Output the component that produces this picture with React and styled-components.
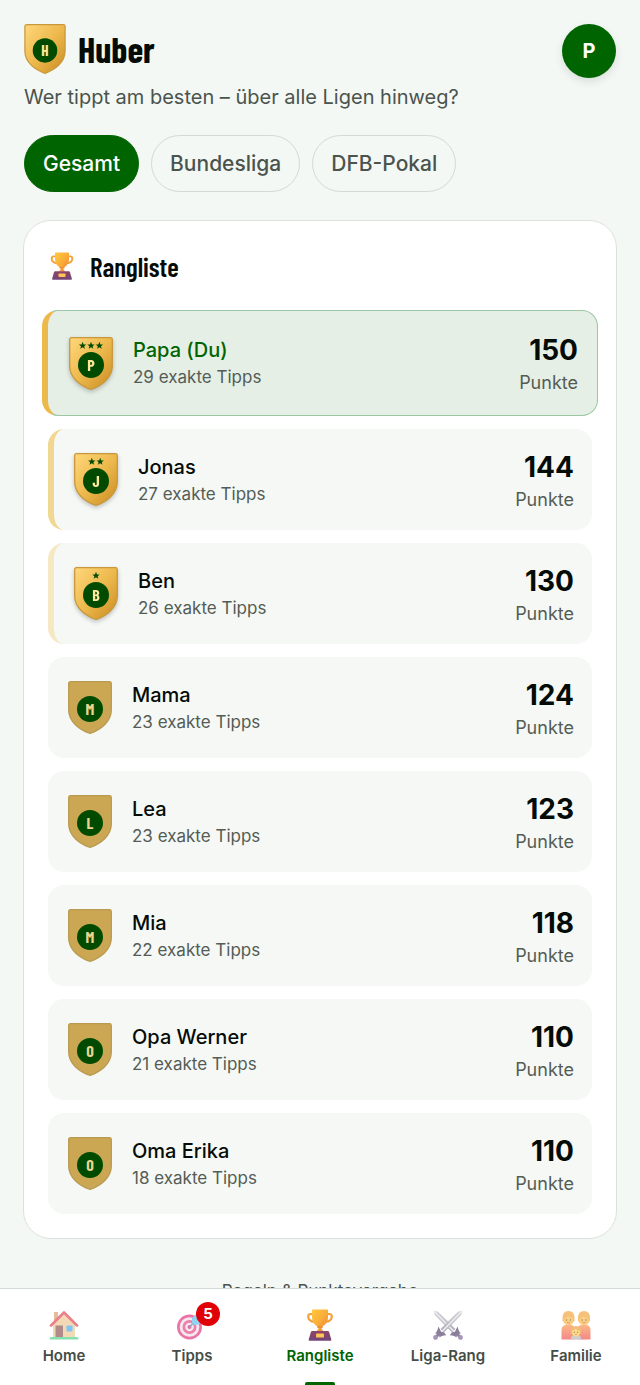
import React, { useState } from "react";
import styled, { createGlobalStyle, css } from "styled-components";

const GlobalStyle = createGlobalStyle`
  * {
    box-sizing: border-box;
  }
  body {
    margin: 0;
    background: #f3f8f5;
    color: #050c07;
    font-family: Inter, "Liberation Sans", sans-serif;
    -webkit-font-smoothing: antialiased;
  }
  button {
    font-family: inherit;
    cursor: pointer;
  }
`;

const display = css`
  font-family: "Barlow Condensed", "Liberation Sans Narrow", "Open Sans Condensed", "Roboto Condensed", sans-serif;
`;

// scrolls underneath the fixed tab bar
const Page = styled.main`
  display: flex;
  flex-direction: column;
  height: 100vh;
  overflow-y: auto;
  scrollbar-width: none;
  padding: 24px 23px 120px;
`;

const TopBar = styled.header`
  display: flex;
  flex-shrink: 0;
  align-items: flex-start;
  justify-content: space-between;
  padding: 0 1px;
`;

const Brand = styled.div`
  display: flex;
  align-items: flex-start;
  gap: 12px;
`;

const FamilyName = styled.h1`
  ${display}
  margin: 0;
  font-size: 36px;
  font-weight: 700;
  line-height: 50px;
`;

const Avatar = styled.button`
  width: 54px;
  height: 54px;
  border: 0;
  border-radius: 50%;
  background: #006400;
  color: #fff;
  font-size: 20px;
  font-weight: 700;
  box-shadow: 0 4px 8px rgba(0, 0, 0, 0.1);
`;

const Subtitle = styled.p`
  margin: 5px 1px 24px;
  color: #4b534d;
  font-size: 20px;
  line-height: 28px;
`;

const Chips = styled.div`
  display: flex;
  flex-shrink: 0;
  gap: 12px;
  padding: 0 1px;
  margin-bottom: 28px;
`;

const Chip = styled.button`
  height: 57px;
  padding: 0 18px;
  border: 1px solid ${(p) => (p.$active ? "#006400" : "#d3dad5")};
  border-radius: 29px;
  background: ${(p) => (p.$active ? "#006400" : "transparent")};
  color: ${(p) => (p.$active ? "#fff" : "#4b534d")};
  font-size: 21px;
  font-weight: 500;
`;

const Card = styled.section`
  flex-shrink: 0;
  padding: 24px;
  border: 1px solid #dbe2dd;
  border-radius: 28px;
  background: #fff;
`;

const CardTitle = styled.h2`
  ${display}
  display: flex;
  align-items: center;
  gap: 14px;
  margin: 3px 0 26px;
  font-size: 27px;
  font-weight: 600;
  line-height: 36px;
`;

const List = styled.ol`
  display: flex;
  flex-direction: column;
  gap: 13px;
  margin: 0;
  padding: 0;
  list-style: none;
`;

const podiumColors = { 1: "#ebb94c", 2: "#f0d792", 3: "#f5e9c4" };

const Row = styled.li`
  display: flex;
  align-items: center;
  gap: 20px;
  height: 101px;
  padding: 0 18px 0 20px;
  border-radius: 16px;
  background: #f5f8f5;
  ${(p) =>
    podiumColors[p.$rank] &&
    css`
      border-left: 6px solid ${podiumColors[p.$rank]};
    `}
  ${(p) =>
    p.$me &&
    css`
      height: 106px;
      margin: 0 -6px;
      padding: 0 19px 0 21px;
      border-top: 1px solid #9dc7a2;
      border-right: 1px solid #9dc7a2;
      border-bottom: 1px solid #9dc7a2;
      background: #e5efe6;
    `}
`;

const Player = styled.div`
  flex: 1;
  min-width: 0;
`;

const Name = styled.div`
  color: ${(p) => (p.$me ? "#006400" : "#050c07")};
  font-size: 20px;
  font-weight: 500;
  line-height: 28px;
`;

const Detail = styled.div`
  color: #545c56;
  font-size: 17px;
  line-height: 26px;
`;

const Score = styled.div`
  padding-top: 4px;
  text-align: right;
`;

const Points = styled.div`
  font-size: 28px;
  font-weight: 700;
  line-height: 36px;
`;

const PointsLabel = styled.div`
  color: #545c56;
  font-size: 18px;
  line-height: 30px;
`;

const RulesLink = styled.a`
  align-self: center;
  flex-shrink: 0;
  margin-top: 38px;
  color: #4b534d;
  font-size: 17px;
  line-height: 28px;
  text-decoration: none;
`;

const TabBar = styled.nav`
  position: fixed;
  right: 0;
  bottom: 0;
  left: 0;
  display: grid;
  grid-template-columns: repeat(5, 1fr);
  height: 97px;
  border-top: 1px solid #d3dad5;
  background: #fff;
`;

const Tab = styled.a`
  display: flex;
  flex-direction: column;
  align-items: center;
  gap: 4px;
  padding-top: 20px;
  color: ${(p) => (p.$active ? "#006400" : "#454d47")};
  font-size: 15px;
  font-weight: 600;
  line-height: 22px;
  text-decoration: none;
`;

const TabIcon = styled.span`
  position: relative;
  display: flex;
  height: 32px;

  svg {
    opacity: ${(p) => (p.$active ? 1 : 0.65)};
  }
`;

const Badge = styled.span`
  position: absolute;
  top: -7px;
  right: -12px;
  width: 24px;
  height: 24px;
  border-radius: 50%;
  background: #e10008;
  color: #fff;
  font-size: 15px;
  font-weight: 700;
  line-height: 24px;
  text-align: center;
`;

const Indicator = styled.span`
  width: 30px;
  height: 3px;
  margin-top: auto;
  border-radius: 2px 2px 0 0;
  background: #006400;
`;

const CrestSvg = styled.svg`
  ${display}
  flex-shrink: 0;
  overflow: visible;
  font-weight: 700;
  filter: ${(p) => (p.$raised ? "drop-shadow(0 2px 2px rgba(0, 0, 0, 0.22))" : "none")};
`;

const starPath = "M0-3.8 1-1.2 3.7-1.1 1.6.6 2.3 3.2 0 1.7-2.3 3.2-1.6.6-3.7-1.1-1-1.2Z";

function Crest({ letter, stars = 0, shiny = true, raised = false, width = 44, height = 53 }) {
  const start = 22 - (stars - 1) * 4.2;
  return (
    <CrestSvg $raised={raised} width={width} height={height} viewBox="0 0 44 53" aria-hidden="true">
      <defs>
        <linearGradient id="crestGold" x1="0" y1="0" x2="1" y2="1">
          <stop offset="0" stopColor="#ffd77c" />
          <stop offset=".5" stopColor="#edb94d" />
          <stop offset="1" stopColor="#c98b20" />
        </linearGradient>
      </defs>
      <path
        d="M2.5 .7H41.5Q43.3 .7 43.3 2.5V29C43.3 41 32 49 22 52.3 12 49 .7 41 .7 29V2.5Q.7 .7 2.5 .7Z"
        fill={shiny ? "url(#crestGold)" : "#cba753"}
        stroke={shiny ? "#c9983b" : "#b99a50"}
        strokeWidth="1.3"
      />
      {Array.from({ length: stars }, (_, i) => (
        <path key={i} d={starPath} transform={`translate(${start + i * 8.4} 8.6)`} fill="#004b00" />
      ))}
      <circle cx="22" cy="28" r="13" fill="#004b00" />
      <text x="22" y="34" textAnchor="middle" fontSize="16" fill={shiny ? "#ffe89a" : "#ead58c"}>
        {letter}
      </text>
    </CrestSvg>
  );
}

function Trophy({ size = 32 }) {
  return (
    <svg width={size} height={size} viewBox="0 0 32 32" aria-hidden="true">
      <defs>
        <linearGradient id="cup" x1="0" y1="0" x2="1" y2="1">
          <stop offset="0" stopColor="#ffc93c" />
          <stop offset=".5" stopColor="#fbae38" />
          <stop offset="1" stopColor="#f07c40" />
        </linearGradient>
        <linearGradient id="cupBase" x1="0" y1="0" x2="0" y2="1">
          <stop offset="0" stopColor="#8f4566" />
          <stop offset="1" stopColor="#744577" />
        </linearGradient>
      </defs>
      <path
        d="M9 5H6.6Q4.2 5 4.2 7.5C4.2 10.8 7 12.6 11 13M23 5H25.4Q27.8 5 27.8 7.5C27.8 10.8 25 12.6 21 13"
        fill="none"
        stroke="#f3a23c"
        strokeWidth="2.2"
      />
      <path
        d="M9 .5H23Q24 .5 24 1.5V8C24 13 21 16.5 18 17.5L17.5 19.5 19.5 22.5H12.5L14.5 19.5 14 17.5C11 16.5 8 13 8 8V1.5Q8 .5 9 .5Z"
        fill="url(#cup)"
      />
      <path d="M13 18H19" stroke="#e98a2a" strokeWidth="1.4" />
      <path
        d="M8.2 22H23.8Q24.8 22 25.1 23L27.3 30.5Q27.5 31.7 26.4 31.7H5.6Q4.5 31.7 4.7 30.5L6.9 23Q7.2 22 8.2 22Z"
        fill="url(#cupBase)"
      />
      <rect x="12" y="24.6" width="8" height="4" rx=".8" fill="#ffc356" />
    </svg>
  );
}

function House() {
  return (
    <svg width="32" height="32" viewBox="0 0 32 32" aria-hidden="true">
      <path d="M6 3H10V12H6Z" fill="#d69a68" />
      <path d="M5 14 16 4.5 27 14V29H5Z" fill="#efc592" />
      <path d="M7.5 16.5H15V28.5H7.5Z" fill="#854f4b" />
      <rect x="18.5" y="16.5" width="6" height="6" rx=".8" fill="#3ba7ee" />
      <path
        d="M3 16.5 16 3.5 29 16.5"
        fill="none"
        stroke="#df3e4c"
        strokeWidth="2.6"
        strokeLinecap="round"
        strokeLinejoin="round"
      />
      <path d="M3 28H29Q30.5 28 30.5 30.5H1.5Q1.5 28 3 28Z" fill="#45cf83" />
    </svg>
  );
}

function Target() {
  return (
    <svg width="32" height="32" viewBox="0 0 32 32" aria-hidden="true">
      <circle cx="13.5" cy="18" r="12.5" fill="#e02b78" />
      <circle cx="13.5" cy="18" r="9.8" fill="#f4dce7" />
      <circle cx="13.5" cy="18" r="7" fill="#df3d81" />
      <circle cx="13.5" cy="18" r="4.3" fill="#f4dce7" />
      <circle cx="13.5" cy="18" r="2" fill="#cf2671" />
      <path d="M13.5 18 20 11.5" stroke="#5274a8" strokeWidth="1.5" />
      <path d="M16 14V9L22 3 23 8.5 29 9.5 23 15.5 18 16Z" fill="#55bdec" />
    </svg>
  );
}

function Swords() {
  return (
    <svg width="32" height="32" viewBox="0 0 32 32" aria-hidden="true">
      <defs>
        <linearGradient id="blade" x1="0" y1="0" x2="1" y2="1">
          <stop offset="0" stopColor="#bfbdc5" />
          <stop offset="1" stopColor="#8b8698" />
        </linearGradient>
        <g id="sword">
          <path d="M1.5 1.5 6 2.8 23.5 20 20 23.5 2.8 6Z" fill="url(#blade)" />
          <path d="M2 2 21.5 22" stroke="#e8e7ec" strokeWidth="1.3" />
          <path
            d="M25.5 17.5Q26.8 23 29 24.5L25 25 24.5 28.5Q23 26.5 17.8 26.2L20 23.3 23 22.7Z"
            fill="#4c3b65"
          />
          <path d="M23.8 23.8 28.3 28.3" stroke="#4c3b65" strokeWidth="3" />
          <circle cx="28.5" cy="28.5" r="2.4" fill="#755f93" />
        </g>
      </defs>
      <use href="#sword" />
      <use href="#sword" transform="matrix(-1 0 0 1 32 0)" />
    </svg>
  );
}

function Family() {
  return (
    <svg width="32" height="32" viewBox="0 0 32 32" aria-hidden="true">
      <defs>
        <linearGradient id="shirt" x1="0" y1="0" x2="0" y2="1">
          <stop offset="0" stopColor="#fb9145" />
          <stop offset="1" stopColor="#ed4a4a" />
        </linearGradient>
        <g id="parent">
          <path d="M2 30.5V21.5Q2 16 7 16H11Q15.5 16 15.5 21.5V30.5Z" fill="url(#shirt)" />
          <path
            d="M3 9Q3 2 9 2T15 9V10.5Q15.5 12.5 14 12.8 13 16 9 16T4 12.8Q2.5 12.5 3 10.5Z"
            fill="#f2a234"
          />
          <path d="M4.5 9.5Q7 9 8.5 7 11 9 13.5 9.5V11.5Q13.5 15.8 9 15.8T4.5 11.5Z" fill="#fdb83c" />
          <circle cx="7" cy="11" r=".8" fill="#6f4a35" />
          <circle cx="11" cy="11" r=".8" fill="#6f4a35" />
          <path d="M7.5 13.3Q9 14.5 10.5 13.3" fill="none" stroke="#a6553c" strokeWidth=".8" />
        </g>
      </defs>
      <use href="#parent" x="-.5" />
      <use href="#parent" x="15" />
      <path d="M11 30.5V29Q11 26.5 14 26.5H18Q21 26.5 21 29V30.5Z" fill="#b5b2b8" />
      <circle cx="16" cy="22.2" r="5.2" fill="#e89b30" />
      <path d="M12 22Q14.5 21 15.5 19.5 17.5 21.5 20 22 20 27.5 16 27.5T12 22Z" fill="#ffcb4c" />
      <circle cx="14.4" cy="23.3" r=".7" fill="#6f4a35" />
      <circle cx="17.6" cy="23.3" r=".7" fill="#6f4a35" />
      <path d="M14.8 25.3Q16 26.3 17.2 25.3" fill="none" stroke="#a6553c" strokeWidth=".7" />
    </svg>
  );
}

const leagues = ["Gesamt", "Bundesliga", "DFB-Pokal"];

const players = [
  { name: "Papa", exact: 29, points: 150, me: true },
  { name: "Jonas", exact: 27, points: 144 },
  { name: "Ben", exact: 26, points: 130 },
  { name: "Mama", exact: 23, points: 124 },
  { name: "Lea", exact: 23, points: 123 },
  { name: "Mia", exact: 22, points: 118 },
  { name: "Opa Werner", exact: 21, points: 110 },
  { name: "Oma Erika", exact: 18, points: 110 },
];

const tabs = [
  { label: "Home", href: "#home", icon: House },
  { label: "Tipps", href: "#tipps", icon: Target, badge: 5 },
  { label: "Rangliste", href: "#rangliste", icon: Trophy, active: true },
  { label: "Liga-Rang", href: "#liga-rang", icon: Swords },
  { label: "Familie", href: "#familie", icon: Family },
];

function PlayerRow({ player, rank }) {
  const { name, exact, points, me } = player;
  const onPodium = rank <= 3;
  return (
    <Row $rank={rank} $me={me}>
      <Crest letter={name[0]} stars={onPodium ? 4 - rank : 0} shiny={onPodium} raised={onPodium} />
      <Player>
        <Name $me={me}>{me ? `${name} (Du)` : name}</Name>
        <Detail>{exact} exakte Tipps</Detail>
      </Player>
      <Score>
        <Points>{points}</Points>
        <PointsLabel>Punkte</PointsLabel>
      </Score>
    </Row>
  );
}

export default function App() {
  const [league, setLeague] = useState("Gesamt");

  return (
    <>
      <GlobalStyle />
      <Page>
        <TopBar>
          <Brand>
            <Crest letter="H" width={42} height={50} />
            <FamilyName>Huber</FamilyName>
          </Brand>
          <Avatar type="button" aria-label="Profil">
            P
          </Avatar>
        </TopBar>
        <Subtitle>Wer tippt am besten – über alle Ligen hinweg?</Subtitle>
        <Chips>
          {leagues.map((name) => (
            <Chip key={name} type="button" $active={name === league} onClick={() => setLeague(name)}>
              {name}
            </Chip>
          ))}
        </Chips>
        <Card>
          <CardTitle>
            <Trophy size={28} />
            Rangliste
          </CardTitle>
          <List>
            {players.map((player, i) => (
              <PlayerRow key={player.name} player={player} rank={i + 1} />
            ))}
          </List>
        </Card>
        <RulesLink href="#regeln">Regeln &amp; Punktevergabe</RulesLink>
      </Page>
      <TabBar>
        {tabs.map(({ label, href, icon: Icon, badge, active }) => (
          <Tab key={label} href={href} $active={active}>
            <TabIcon $active={active}>
              <Icon />
              {badge && <Badge>{badge}</Badge>}
            </TabIcon>
            {label}
            {active && <Indicator />}
          </Tab>
        ))}
      </TabBar>
    </>
  );
}
